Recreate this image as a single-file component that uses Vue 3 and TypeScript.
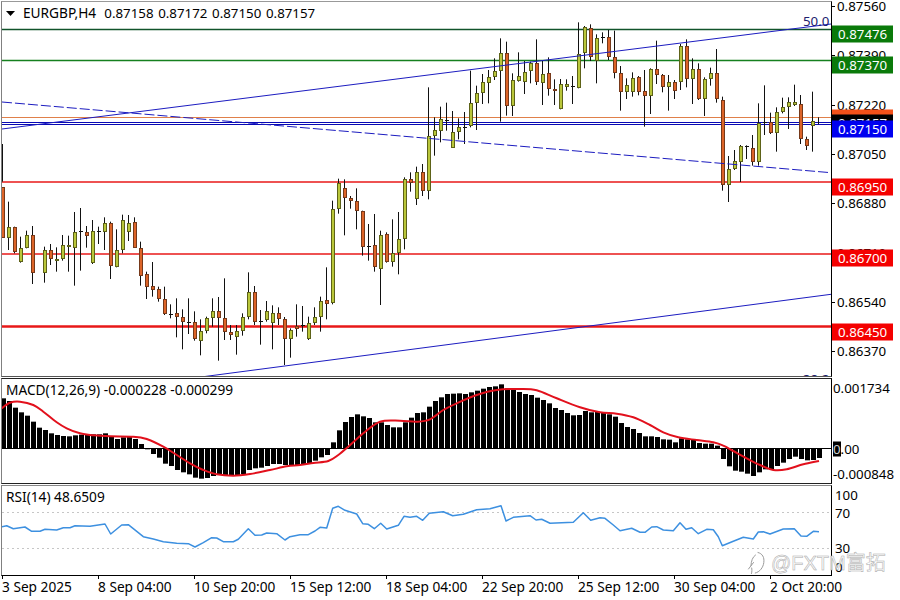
<script setup lang="ts">
type Tag = { text: string; y: number; kind: string }

// candle data in 3x zoom units: [high, low, bodyTop, bodyBottom, up?1:0] (offset y=170 in block A)
const blockA: number[][] = [
  [-78,35,52,205,0],[95,240,170,205,1],[170,250,170,245,0],[200,278,233,277,1],[182,235,196,233,1],[168,342,196,310,0],[],
  [230,338,241,310,1],[222,285,241,268,0],[232,305,266,274,1],[195,272,226,268,1],[197,305,226,232,1],[126,347,187,233,1],
  [114,302,184,186,1],[168,233,186,197,0],[150,282,184,280,1],[170,222,184,185,1],[142,240,159,187,1],[155,327,159,287,0],
  [178,292,241,290,1],[134,250,151,241,1],[135,213,159,187,1],[142,233,157,233,0],[215,347,233,317,0],[305,387,313,350,0],
  [276,380,349,359,0],[350,395,358,386,0],[350,435,386,433,0],[403,445,431,432,0],[385,502,430,442,0],[418,538,442,456,0],
  [385,492,456,457,0],[424,512,457,506,0],[448,556,484,512,1],[440,490,445,484,1],[385,470,424,445,1],[381,572,424,445,0],
  [325,510,445,485,0],[465,510,485,494,0],[465,554,484,500,1],[430,497,440,484,1],[307,448,367,440,1],[348,465,367,455,0],
  [420,524,452,453,0],[393,455,422,451,1],[406,538,430,460,1],[412,465,430,448,0],[441,585,446,508,0],[475,563,479,508,1],
  [403,500,468,478,0],[408,485,464,468,0],[440,510,458,506,1],[412,465,440,458,1],[380,485,392,440,1],[292,448,391,403,0],
  [92,403,116,400,1],[26,131,40,116,1],[28,196,55,83,0],[78,116,85,94,0],[55,178,94,122,0],[122,257,124,230,0],
  [162,272,227,228,0],[132,305,226,290,0],[182,405,194,298,1],[187,278,193,276,0],[148,290,250,275,1],[126,313,206,250,1],
  [22,238,26,208,1],[7,65,26,40,0],
]
const blockB: number[][] = [
  [500,615,517,598,1],[492,588,517,572,0],[262,598,408,572,1],[352,467,390,408,1],[320,427,358,394,1],[308,392,361,362,0],
  [333,443,397,443,1],[355,418,382,397,1],[336,432,380,381,0],[212,382,310,378,1],[257,390,278,310,1],[222,312,246,278,1],
  [210,310,230,248,1],[175,240,214,230,1],[115,365,160,214,1],[125,347,160,318,0],[220,348,240,318,1],[157,245,228,242,1],
  [183,282,216,247,1],[185,250,190,214,1],[118,255,190,247,0],[183,315,221,248,1],[172,287,220,268,0],[238,315,267,274,0],
  [237,328,253,328,1],[238,272,253,260,1],[228,312,259,260,0],[67,265,162,263,1],[78,205,82,160,1],[73,183,85,170,0],
  [103,250,115,182,1],[97,130,111,113,0],[90,180,112,170,0],[92,235,170,220,0],[198,332,220,275,0],[235,297,256,276,1],
  [217,290,235,276,1],[228,286,232,276,0],[210,380,274,287,0],[205,342,207,287,1],[122,252,208,224,0],[222,277,224,260,0],
  [225,332,247,260,1],[240,297,246,274,0],[132,270,138,245,1],[118,262,138,238,0],[175,312,206,238,1],[190,300,206,298,0],
  [232,348,238,298,1],[203,257,220,238,1],[147,308,220,296,0],[290,572,300,555,0],[468,606,508,555,1],[450,510,484,508,1],
  [435,546,439,485,1],[436,477,438,441,1],[405,497,445,485,0],[310,497,368,485,1],[256,405,367,368,0],[338,402,365,400,0],
  [322,455,337,400,1],[293,340,322,337,1],[292,387,307,322,1],[254,318,307,315,1],[285,432,313,418,0],[410,450,418,437,0],
  [275,455,364,378,1],[352,373,352,353,0],
]
const raw = [
  ...blockA.map((c) => (c.length ? [c[0] / 3 + 170, c[1] / 3 + 170, c[2] / 3 + 170, c[3] / 3 + 170, c[4]] : c)),
  ...blockB.map((c) => [c[0] / 3, c[1] / 3, c[2] / 3, c[3] / 3, c[4]]),
]
const candles = raw
  .map((c, i) => ({ c, px: 2 + 6 * i, id: i }))
  .filter((o) => o.c.length > 0)
  .map((o) => ({
    id: o.id,
    wx: o.px + 0.5,
    hi: o.c[0],
    lo: o.c[1],
    top: Math.round(o.c[2]),
    h: Math.round(o.c[3]) - Math.round(o.c[2]),
    bx: o.px - 0.5,
    up: o.c[4] === 1,
  }))

// MACD histogram: top of each bar in 3x zoom units (offset y=375), zero at 220
const macd = [
  70,78,98,112,122,140,158,165,175,180,183,184,181,179,178,178,178,175,185,192,187,186,192,207,223,237,248,266,273,285,292,298,308,311,309,303,300,300,300,300,297,285,280,278,273,267,267,270,271,270,
  267,265,257,247,240,202,166,141,126,118,124,129,142,142,150,157,157,142,128,114,112,95,78,67,57,56,55,57,52,47,41,36,34,28,40,45,51,57,60,68,75,85,99,105,114,121,120,108,112,110,
  112,118,125,144,156,162,174,184,184,186,193,194,202,190,193,193,204,206,206,212,252,274,287,290,296,303,292,283,283,273,263,252,245,252,256,255,249,
]
const zeroY = 448
const bars = macd.map((v, i) => {
  const y = 375 + v / 3
  return { id: i, x: 1 + 6 * i, y: Math.min(y, zeroY), h: Math.abs(y - zeroY) }
})

const toPts = (arr: number[], ox: number, oy: number) => {
  const out: [number, number][] = []
  for (let i = 0; i < arr.length; i += 2) out.push([ox + arr[i] / 3, oy + arr[i + 1] / 3])
  return out
}
const signalPts = [
  ...toPts([5,100,30,83,60,80,100,90,130,110,170,142,200,160,240,175,280,181,330,184,400,185,440,192,490,215,530,240,570,265,610,285,650,298,700,302,750,297,810,285,860,274], 0, 375),
  ...toPts([0,270,40,264,85,258,115,240,145,215,190,175,240,140,300,137,350,140,390,133,430,105,470,85,530,60,590,45,660,42,710,46,770,70,840,97], 300, 375),
  ...toPts([0,112,50,116,100,127,150,150,190,172,235,187,290,195,340,202,370,212,400,228,440,250,480,270,520,285,560,283,610,268,657,258], 600, 375),
]
const smooth = (p: [number, number][]) => {
  let d = `M${p[0][0]} ${p[0][1]}`
  for (let i = 0; i < p.length - 1; i++) {
    const a = p[Math.max(0, i - 1)], b = p[i], c = p[i + 1], e = p[Math.min(p.length - 1, i + 2)]
    d += ` C${(b[0] + (c[0] - a[0]) / 6).toFixed(1)} ${(b[1] + (c[1] - a[1]) / 6).toFixed(1)} ${(c[0] - (e[0] - b[0]) / 6).toFixed(1)} ${(c[1] - (e[1] - b[1]) / 6).toFixed(1)} ${c[0].toFixed(1)} ${c[1].toFixed(1)}`
  }
  return d
}
const signalPath = smooth(signalPts)

const rsiPts = [
  ...toPts([5,455,20,452,40,461,75,456,95,469,120,469,135,463,170,465,190,458,210,458,225,452,270,454,315,447,332,477,365,450,385,449,430,485,460,492,490,500,530,505,565,506,585,516,610,503,635,488,650,489,670,500,700,500,715,493,745,461,765,481,785,480,800,474,830,476,855,495,870,485], 0, 375),
  ...toPts([0,479,25,479,45,468,60,457,80,459,98,400,115,394,135,406,170,417,188,446,205,448,223,461,242,445,260,462,295,451,312,424,330,427,350,424,368,436,388,415,430,410,458,422,490,418,530,404,570,401,603,392,618,438,640,427,690,422,708,435,725,433,750,445,820,442,850,413,872,436], 300, 375),
  ...toPts([0,428,15,430,40,450,60,467,95,460,120,472,135,472,155,456,170,455,190,465,220,467,240,443,258,463,275,458,295,476,320,463,340,464,355,485,367,512,400,499,430,487,460,492,475,471,490,470,510,477,550,462,583,461,603,483,620,484,640,469,657,470], 600, 375),
]
const rsiLine = rsiPts.map((p) => `${p[0].toFixed(1)},${p[1].toFixed(1)}`).join(' ')

// y values are centres within the main pane, whose top edge lies 1px below the page top
const prices = [
  { t: '0.87560', y: 5 }, { t: '0.87390', y: 53.5 }, { t: '0.87220', y: 103.5 }, { t: '0.87050', y: 152.5 },
  { t: '0.86880', y: 202 }, { t: '0.86710', y: 251.5 }, { t: '0.86540', y: 300.5 }, { t: '0.86370', y: 349.5 },
]
const tags: Tag[] = [
  { text: '0.87476', y: 33, kind: 'green' },
  { text: '0.87370', y: 63.5, kind: 'green' },
  { text: '', y: 116.5, kind: 'orange' },
  { text: '0.87157', y: 121.5, kind: 'black' },
  { text: '0.87150', y: 127.5, kind: 'blue' },
  { text: '0.86950', y: 185.5, kind: 'red' },
  { text: '0.86700', y: 257, kind: 'red' },
  { text: '0.86450', y: 330.5, kind: 'red' },
]
const times = ['3 Sep 2025', '8 Sep 04:00', '10 Sep 20:00', '15 Sep 12:00', '18 Sep 04:00', '22 Sep 20:00', '25 Sep 12:00', '30 Sep 04:00', '2 Oct 20:00']
const quotes = ['0.87158', '0.87172', '0.87150', '0.87157']
</script>

<template>
  <div class="chart">
    <section class="pane main-pane">
      <div class="plot">
        <svg class="svg" width="829" height="374" viewBox="2 2 829 374" xmlns="http://www.w3.org/2000/svg">
          <line x1="2" x2="831" y1="29.5" y2="29.5" class="l-darkgreen" />
          <line x1="2" x2="831" y1="60.5" y2="60.5" class="l-green" />
          <line x1="2" x2="831" y1="117.5" y2="117.5" class="l-orange" />
          <line x1="2" x2="831" y1="122.5" y2="122.5" class="l-blue" />
          <line x1="2" x2="831" y1="124.5" y2="124.5" class="l-blue" />
          <line x1="2" x2="831" y1="182" y2="182" class="l-red" />
          <line x1="2" x2="831" y1="254" y2="254" class="l-red" />
          <line x1="2" x2="831" y1="326.5" y2="326.5" class="l-red thick" />

          <g v-for="c in candles" :key="c.id">
            <line :x1="c.wx" :x2="c.wx" :y1="c.hi" :y2="c.lo" class="wick" />
            <rect v-if="c.h >= 2" :x="c.bx" :y="c.top + 0.5" width="3" :height="c.h - 1" :class="c.up ? 'up' : 'down'" />
            <line v-else-if="c.id !== 136" :x1="c.bx - 0.5" :x2="c.bx + 3.5" :y1="c.top + 0.5" :y2="c.top + 0.5" class="wick" />
          </g>

          <line x1="2" y1="129" x2="831" y2="24" class="ch" />
          <line x1="2" y1="102" x2="831" y2="172.7" class="ch dash" />
          <line x1="201" y1="377" x2="831" y2="294.3" class="ch" />
          <text x="803" y="26" class="fib">50.0</text>
          <text x="803" y="384" class="fib">38.2</text>
        </svg>
      </div>
      <div class="axis">
        <span v-for="p in prices" :key="p.t" class="tick" :style="{ top: p.y + 'px' }">{{ p.t }}</span>
        <span v-for="t in tags" :key="t.kind + t.y" class="tag" :class="t.kind" :style="{ top: t.y + 'px' }">{{ t.text }}</span>
      </div>
      <div class="head">
        <svg class="tri" width="9" height="5" viewBox="0 0 9 5"><polygon points="0,0 9,0 4.5,5" /></svg>
        <span class="sym">EURGBP,H4</span>
        <span v-for="q in quotes" :key="q" class="quote">{{ q }}</span>
      </div>
    </section>

    <section class="pane macd-pane">
      <div class="plot">
        <svg class="svg" width="829" height="104" viewBox="2 379 829 104" xmlns="http://www.w3.org/2000/svg">
          <rect v-for="b in bars" :key="b.id" :x="b.x" :y="b.y" width="5" :height="b.h" class="bar" />
          <line x1="2" x2="831" y1="448.5" y2="448.5" class="zero" />
          <path :d="signalPath" class="signal" />
        </svg>
      </div>
      <div class="axis">
        <span class="tick sub" style="top: 9.500px">0.001734</span>
        <span class="tick sub zero-label" style="top: 70.500px"><b>0</b>.00</span>
        <span class="tick sub" style="top: 95.500px">-0.000848</span>
      </div>
      <div class="head ind">MACD(12,26,9) -0.000228 -0.000299</div>
    </section>

    <section class="pane rsi-pane">
      <div class="plot">
        <svg class="svg" width="829" height="89" viewBox="2 486 829 89" xmlns="http://www.w3.org/2000/svg">
          <line x1="2" x2="831" y1="512.5" y2="512.5" class="level" />
          <line x1="2" x2="831" y1="548.5" y2="548.5" class="level" />
          <polyline :points="rsiLine" class="rsi" />
        </svg>
      </div>
      <div class="axis">
        <span class="tick rsi-t" style="top: 10px">100</span>
        <span class="tick rsi-t" style="top: 28px">70</span>
        <span class="tick rsi-t" style="top: 63px">30</span>
        <span class="tick rsi-t" style="top: 82px">0</span>
      </div>
      <div class="head ind">RSI(14) 48.6509</div>
    </section>

    <footer class="time">
      <span v-for="t in times" :key="t" class="tcell">{{ t }}</span>
    </footer>

    <div class="mark">
      <svg class="mark-icon" width="18" height="24" viewBox="0 0 18 24" fill="none">
        <path d="M11 1.5c4.5 1 6.5 5 5.8 10-.6 5-4 9.5-8.5 10.5" />
        <path d="M8.5 4C5.500 6 4.200 10 4 14.500M6.500 11.500l-5 6.500M4.500 22.500c.5-2 .5-4 .2-5.500" />
      </svg>
      <span class="mark-text">@FXTM富拓</span>
    </div>
  </div>
</template>

<style scoped>
.chart {
  position: relative;
  width: 900px;
  height: 600px;
  background: #fff;
  overflow: hidden;
  box-sizing: border-box;
  padding: 1px 0 0 1px;
  color: #000;
  font: 13.7px/16px "Noto Sans", "Liberation Sans", sans-serif;
}
.pane {
  position: relative;
  display: flex;
}
.plot {
  flex: none;
  width: 829px;
  border-left: 1px solid #808080;
  border-right: 1px solid #000;
  border-top: 1px solid #999;
  border-bottom: 1px solid #555;
}
.macd-pane .plot {
  border-top-color: #222;
  border-bottom-color: #222;
}
.rsi-pane .plot {
  border-top-color: #888;
  border-bottom-color: #000;
}
.main-pane { height: 376px; }
.macd-pane { height: 106px; margin-top: 1px; }
.rsi-pane { height: 91px; margin-top: 1px; }
.svg {
  display: block;
}
.axis {
  position: relative;
  flex: 1;
}
.tick {
  position: absolute;
  left: 5px;
  font-size: 13.3px;
  line-height: 14px;
  white-space: nowrap;
  transform: translateY(-50%);
}
.tick::before {
  content: "";
  position: absolute;
  left: -5px;
  top: 7px;
  width: 3px;
  height: 1px;
  background: #000;
}
.sub { left: 1px; }
.sub::before, .rsi-t::before { display: none; }
.rsi-t { left: 3px; }
.zero-label b {
  display: inline-block;
  font-weight: 400;
  background: #000;
  color: #ccc;
  line-height: 15px;
}
.tag {
  position: absolute;
  left: 0;
  width: 61px;
  height: 17px;
  font-size: 13.3px;
  line-height: 17px;
  padding-left: 6px;
  box-sizing: border-box;
  color: #fff;
  transform: translateY(-50%);
}
.green { background: #0a7a0a; }
.orange { background: #f4511a; }
.black { background: #000; }
.blue { background: #0000f0; }
.red { background: #f40000; }
.head {
  position: absolute;
  left: 5px;
  top: 4px;
  display: flex;
  align-items: center;
  gap: 4.700px;
  white-space: nowrap;
}
.tri {
  margin: 0 3.300px 0 0;
}
.sym {
  margin-right: 3.500px;
}
.quote {
  font-size: 13.3px;
}
.ind {
  top: 4px;
}
.l-darkgreen { stroke: #11532b; stroke-width: 1.6; }
.l-green { stroke: #15801f; stroke-width: 1.5; }
.l-orange { stroke: #e0804a; stroke-width: 1; }
.l-blue { stroke: #0808b4; stroke-width: 1; }
.l-red { stroke: #e81818; stroke-width: 1.7; }
.thick { stroke-width: 2.3; }
.wick { stroke: #111; stroke-width: 1; }
.up { fill: #b9c63a; stroke: #5d6218; stroke-width: 1; }
.down { fill: #dc6428; stroke: #76391a; stroke-width: 1; }
.ch { stroke: #1c1cc0; stroke-width: 1; }
.dash { stroke-dasharray: 10 3; }
.fib { font-size: 13.3px; fill: #20206e; font-family: "Noto Sans", sans-serif; }
.bar { fill: #000; }
.zero { stroke: #000; stroke-width: 1; }
.signal { fill: none; stroke: #e2101c; stroke-width: 2; stroke-linejoin: round; }
.level { stroke: #c6c6c6; stroke-width: 1; stroke-dasharray: 2 3; }
.rsi { fill: none; stroke: #3d90e0; stroke-width: 1.5; stroke-linejoin: round; }
.time {
  display: flex;
  padding: 3px 0 0 1px;
}
.tcell {
  position: relative;
  flex: none;
  width: 96px;
  line-height: 16px;
  white-space: nowrap;
}
.tcell::before {
  content: "";
  position: absolute;
  left: 0;
  top: -3px;
  width: 1px;
  height: 3px;
  background: #000;
}
.mark {
  position: absolute;
  left: 747px;
  top: 551px;
  display: flex;
  align-items: center;
  gap: 6px;
}
.mark-icon path {
  stroke: #9a9a9a;
  stroke-width: 1;
  stroke-linecap: round;
}
.mark-text {
  font: 20px/24px "Liberation Sans", "Noto Sans CJK SC", sans-serif;
  color: rgba(255, 255, 255, 0.85);
  -webkit-text-stroke: 0.5px #a8a8a8;
  white-space: nowrap;
}
</style>
